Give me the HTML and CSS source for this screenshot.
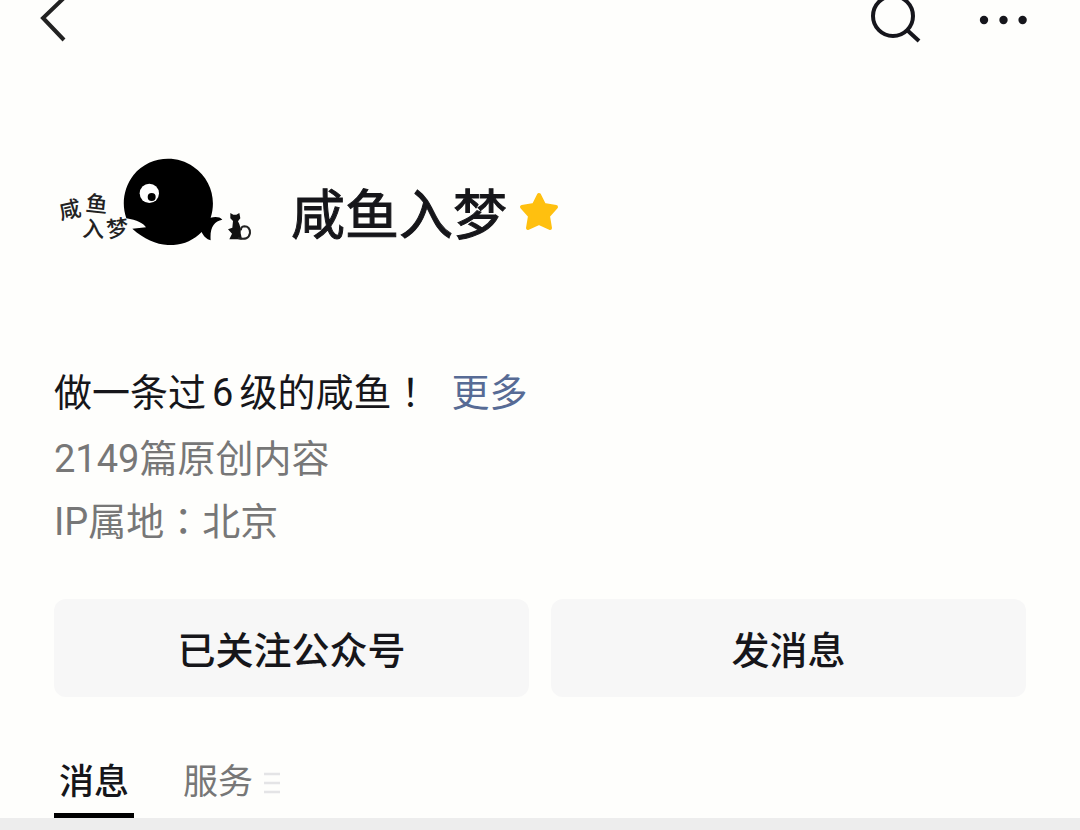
FILE: index.html
```html
<!DOCTYPE html>
<html lang="zh-CN">
<head>
    <meta charset="UTF-8">
    <meta name="viewport" content="width=device-width, initial-scale=1.0">
    <title>咸鱼入梦</title>
    <link rel="stylesheet" href="styles.css">
</head>
<body>
    <header class="navbar">
        <button class="icon-btn" type="button" aria-label="返回">
            <svg width="28" height="48" viewBox="0 0 28 48">
                <path d="M26 -4 L3 18 L24 40" fill="none" stroke="#222" stroke-width="4"/>
            </svg>
        </button>
        <div class="navbar-actions">
            <button class="icon-btn" type="button" aria-label="搜索">
                <svg width="52" height="48" viewBox="0 0 52 48">
                    <circle cx="23" cy="16" r="20" fill="none" stroke="#16161c" stroke-width="4"/>
                    <path d="M37 30 L49 41" fill="none" stroke="#16161c" stroke-width="4"/>
                </svg>
            </button>
            <button class="icon-btn" type="button" aria-label="更多操作">
                <svg width="50" height="48" viewBox="0 0 50 48">
                    <g fill="#16161c">
                        <circle cx="6" cy="20" r="4.2"/>
                        <circle cx="25.5" cy="20" r="4.2"/>
                        <circle cx="44.6" cy="20" r="4.2"/>
                    </g>
                </svg>
            </button>
        </div>
    </header>

    <main class="profile">
        <div class="account">
            <svg class="logo" width="200" height="90" viewBox="42 45 600 270" role="img" aria-label="咸鱼入梦">
                <g class="logo-text">
                    <text transform="translate(62 239) rotate(-12)">咸</text>
                    <text transform="translate(135 212) rotate(6)">鱼</text>
                    <text transform="translate(126 289) rotate(3)">入</text>
                    <text transform="translate(203 293) rotate(-8)">梦</text>
                </g>
                <!-- whale body with open mouth -->
                <path d="M259 235 C244 192 251 145 280 106 C325 50 405 42 460 80 C512 115 530 178 512 233 C525 230 540 230 547 239 C522 244 509 263 512 301 C500 298 490 288 485 276 C434 328 350 332 277 266 L318 262 C312 251 290 240 259 235 Z" fill="#000"/>
                <circle cx="328" cy="160" r="29" fill="#fff"/>
                <circle cx="335" cy="171" r="12" fill="#000"/>
                <!-- cat -->
                <path d="M571 219 L580 224 L589 224 L598 219 L601 235 L594 244 Q604 262 602 280 L606 298 L568 298 L576 281 L564 268 L577 263 L579 243 L571 235 Z" fill="#111"/>
                <path d="M594 294 Q626 303 630 279 Q630 259 613 259 Q602 260 603 271" fill="none" stroke="#222" stroke-width="6"/>
            </svg>
            <h1 class="account-name">咸鱼入梦</h1>
            <svg class="star" width="40" height="40" viewBox="0 0 40 40" aria-hidden="true">
                <path d="M20 3 L25 13 L37 15 L29 24 L31 36 L20 31 L9 36 L11 24 L3 15 L15 13 Z" fill="#ffc00f" stroke="#ffc00f" stroke-width="4" stroke-linejoin="round"/>
            </svg>
        </div>

        <div class="intro">
            <p class="bio">做一条过<span class="digit">6</span>级的咸鱼<span class="punct" lang="zh-TW">！</span><a class="more" href="#">更多</a></p>
            <p class="meta">2149篇原创内容</p>
            <p class="meta">IP属地<span class="punct" lang="zh-TW">：</span>北京</p>
        </div>

        <div class="actions">
            <button class="btn" type="button">已关注公众号</button>
            <button class="btn" type="button">发消息</button>
        </div>

        <nav class="tabs">
            <a class="tab active" href="#">消息</a>
            <a class="tab" href="#">服务
                <svg class="menu-icon" width="16" height="22" viewBox="0 0 16 22" aria-hidden="true">
                    <path d="M0 2 H16 M0 11 H16 M0 20 H16" stroke="#e4e4e6" stroke-width="2.5"/>
                </svg>
            </a>
        </nav>
    </main>

    <div class="feed"></div>
</body>
</html>
```

FILE: styles.css
```css
* {
    margin: 0;
    padding: 0;
    box-sizing: border-box;
}

body {
    display: flex;
    flex-direction: column;
    min-height: 100vh;
    background-color: #fefefc;
    color: #16161a;
    font-family: Roboto, "Noto Sans CJK SC", sans-serif;
    font-size: 38px;
    line-height: 63px;
}

a {
    color: inherit;
    text-decoration: none;
}

button {
    border: none;
    background: none;
    color: inherit;
    font: inherit;
    cursor: pointer;
}

svg {
    display: block;
}

.navbar {
    display: flex;
    justify-content: space-between;
    padding: 0 52px 0 40px;
}

.navbar-actions {
    display: flex;
    gap: 56px;
}

.profile {
    padding: 0 54px;
}

.account {
    display: flex;
    align-items: flex-start;
    height: 210px;
    margin-top: 104px;
}

.logo {
    margin-top: 3px;
}

.logo-text {
    font-family: "Noto Sans CJK SC", sans-serif;
    font-size: 66px;
    font-weight: 500;
    fill: #222;
}

.account-name {
    margin: 33px 12px 0 37px;
    font-size: 54px;
    font-weight: 400;
    -webkit-text-stroke: 1px #16161a;
}

.star {
    margin-top: 40px;
}

.bio {
    margin-bottom: 3px;
}

.digit {
    margin: 0 6px;
}

.punct {
    font-family: "Noto Sans CJK TC", sans-serif;
    line-height: 1;
}

.more {
    margin-left: 22px;
    color: #576b95;
}

.meta {
    color: #777;
}

.actions {
    display: flex;
    gap: 22px;
    margin-top: 45px;
}

.btn {
    flex: 1;
    padding: 21px 0 14px;
    border-radius: 12px;
    background-color: #f7f7f7;
    font-weight: 500;
}

.tabs {
    display: flex;
    gap: 49px;
    margin-top: 56px;
}

.tab {
    display: flex;
    align-items: center;
    gap: 11px;
    border-bottom: 5px solid transparent;
    color: #777;
    font-size: 35px;
    line-height: 60px;
}

.tab.active {
    padding: 0 5px;
    border-bottom-color: #000;
    color: #16161a;
    font-weight: 500;
}

.feed {
    flex: 1;
    min-height: 12px;
    background-color: #ededed;
}
```
